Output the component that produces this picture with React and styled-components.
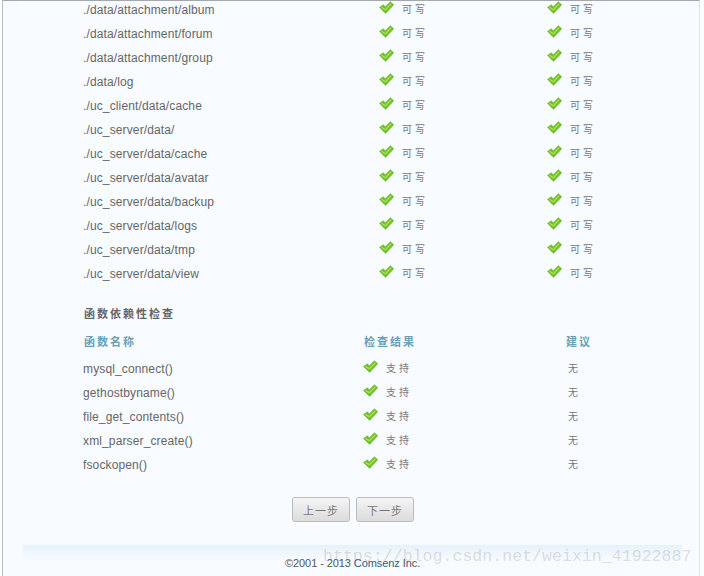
import React from 'react';
import styled, { createGlobalStyle } from 'styled-components';

const GlobalStyle = createGlobalStyle`
  html, body {
    margin: 0;
    padding: 0;
    background: #fff;
  }
`;

const Frame = styled.div`
  position: relative;
  box-sizing: border-box;
  width: 698px;
  height: 576px;
  margin-left: 2px;
  overflow: hidden;
  background: #f8fbff;
  border-top: 1px solid #a4a8ac;
  border-left: 1px solid #b4c0c4;
  border-right: 1px solid #d4e2ea;
  font-family: "Liberation Sans", "Noto Sans CJK SC", sans-serif;
  font-size: 12px;
  color: #666;
`;

const Content = styled.div`
  width: 540px;
  margin-top: -3px;
  padding-left: 80px;
`;

const Row = styled.div`
  display: grid;
  grid-template-columns: ${(p) => p.$cols};
  align-items: center;
  height: 24px;
`;

const Name = styled.span`
  letter-spacing: 0.13px;
  white-space: nowrap;
`;

const Status = styled.span`
  display: flex;
  align-items: center;
  gap: 8px;
`;

const Cjk = styled.span`
  position: relative;
  top: -2px;
  font-size: 10px;
  letter-spacing: 3px;
  color: #777;
  white-space: nowrap;
`;

const Tick = styled.svg`
  display: block;
  margin-bottom: 6px;
`;

const Title = styled.h3`
  margin: 16px 0 0 1px;
  height: 24px;
  line-height: 24px;
  font-size: 11px;
  font-weight: bold;
  letter-spacing: 2px;
  color: #666;
`;

const Head = styled.div`
  display: grid;
  grid-template-columns: ${(p) => p.$cols};
  align-items: center;
  height: 24px;
  margin: 3px 0 4px 1px;
  font-size: 11px;
  font-weight: bold;
  letter-spacing: 2px;
  color: #6a9fb5;
`;

const Buttons = styled.div`
  display: flex;
  justify-content: center;
  gap: 6px;
  width: 122px;
  margin: 20px 0 0 209px;
`;

const Button = styled.button`
  box-sizing: border-box;
  width: 58px;
  height: 25px;
  padding: 0;
  border: 1px solid #bbb;
  border-radius: 3px;
  background: linear-gradient(#f4f4f4, #dcdcdc);
  font-family: inherit;
  font-size: 11px;
  letter-spacing: 1px;
  color: #777;
`;

const FooterBand = styled.div`
  height: 15px;
  margin: 23px 17px 0 20px;
  background: linear-gradient(#e6f2fb, #f8fbff);
`;

const Footer = styled.div`
  margin: 0 0 0 282px;
  line-height: 6px;
  font-size: 11px;
  letter-spacing: -0.08px;
  white-space: nowrap;
  color: #555;
`;

const Brand = styled.span`
  color: #2b5f8c;
`;

const Watermark = styled.div`
  position: absolute;
  left: 320px;
  top: 546px;
  font-family: "Liberation Mono", monospace;
  font-size: 16.6px;
  white-space: nowrap;
  color: rgba(120, 120, 120, 0.24);
`;

const Check = () => (
  <Tick width="15" height="13" viewBox="0 0 16 13">
    <path d="M0.5 6.5 L4.5 3.5 L6.8 5.8 L12 0.3 L15.8 3.5 L7 12.8 Z" fill="#6fc02a" stroke="#62ad24" strokeWidth="0.5" />
    <path d="M2.6 6.4 L6.8 9 L13 2.4" fill="none" stroke="#a4e052" strokeWidth="1.6" />
  </Tick>
);

const DIRS = [
  './data/attachment/album',
  './data/attachment/forum',
  './data/attachment/group',
  './data/log',
  './uc_client/data/cache',
  './uc_server/data/',
  './uc_server/data/cache',
  './uc_server/data/avatar',
  './uc_server/data/backup',
  './uc_server/data/logs',
  './uc_server/data/tmp',
  './uc_server/data/view',
];

const FUNCS = ['mysql_connect()', 'gethostbyname()', 'file_get_contents()', 'xml_parser_create()', 'fsockopen()'];

const DIR_COLS = '296px 168px 100px';
const FUNC_COLS = '280px 205px 60px';
const HEAD_COLS = '280px 202px 60px';

const Passed = ({ label }) => (
  <Status>
    <Check />
    <Cjk>{label}</Cjk>
  </Status>
);

export default function App() {
  return (
    <>
      <GlobalStyle />
      <Frame>
        <Content>
          {DIRS.map((dir) => (
            <Row key={dir} $cols={DIR_COLS}>
              <Name>{dir}</Name>
              <Passed label="可写" />
              <Passed label="可写" />
            </Row>
          ))}
          <Title>函数依赖性检查</Title>
          <Head $cols={HEAD_COLS}>
            <span>函数名称</span>
            <span>检查结果</span>
            <span>建议</span>
          </Head>
          {FUNCS.map((fn) => (
            <Row key={fn} $cols={FUNC_COLS}>
              <Name>{fn}</Name>
              <Passed label="支持" />
              <Cjk>无</Cjk>
            </Row>
          ))}
          <Buttons>
            <Button>上一步</Button>
            <Button>下一步</Button>
          </Buttons>
        </Content>
        <FooterBand />
        <Footer>
          ©2001 - 2013 <Brand>Comsenz</Brand> Inc.
        </Footer>
        <Watermark>https://blog.csdn.net/weixin_41922887</Watermark>
      </Frame>
    </>
  );
}
